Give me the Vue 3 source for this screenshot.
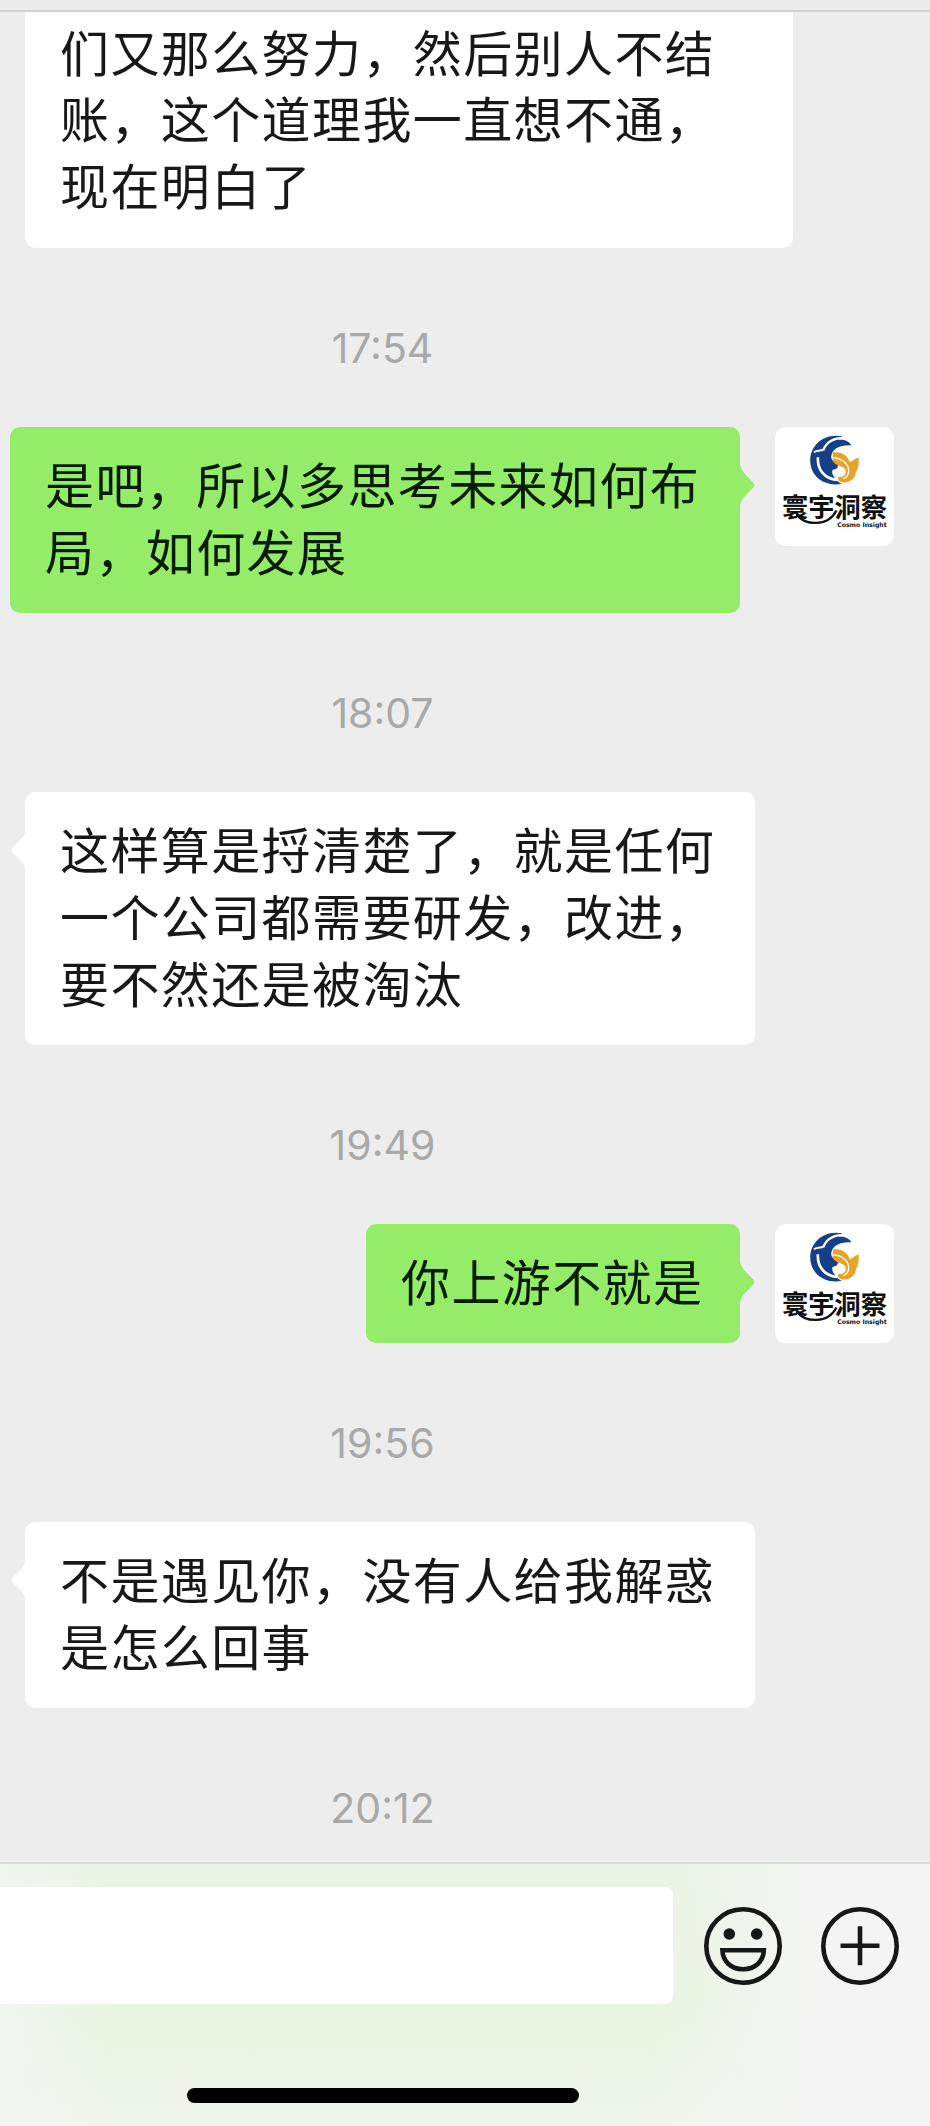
<template>
  <div class="screen">
    <header class="nav-edge"></header>

    <main class="chat">
      <template v-for="(item, i) in messages" :key="i">
        <div class="row" :class="item.from">
          <div class="bubble" :class="{ wide: item.wide, cut: item.cut }">
            <p v-for="line in item.lines" :key="line" class="line">{{ line }}</p>
            <svg v-if="!item.cut" class="tail" viewBox="0 0 15 40">
              <path d="M0 0 C1 4 3 7 5 9 L13.2 17.4 Q15.4 20 13.2 22.6 L5 31 C3 33 1 36 0 40 Z" />
            </svg>
          </div>
          <svg v-if="item.from === 'me'" class="avatar" viewBox="47 21 358 358">
            <rect x="47" y="21" width="358" height="358" fill="#fff" />
            <path
              fill="#153f86"
              d="M249 49 C196 38 153 74 153 122 C153 170 196 202 248 192 C238 188 233 184 231 177 C222 170 217 160 220 150 C232 148 238 143 236 136 C228 128 216 124 216 110 C218 88 240 74 277 76 C266 60 252 58 238 60 Z"
            />
            <path fill="none" stroke="#fff" stroke-width="7" d="M262 54 C226 52 202 66 192 91" />
            <path fill="none" stroke="#fff" stroke-width="6" d="M164 97 C174 90 182 93 192 90" />
            <path fill="none" stroke="#fff" stroke-width="8" d="M176 112 C174 148 194 176 234 180" />
            <path
              fill="#e6a428"
              d="M221 98 C244 94 264 104 272 126 C280 126 286 116 299 113 C300 134 296 150 290 158 C290 176 272 190 250 188 C238 186 234 178 238 171 C256 174 264 160 258 148 C250 136 226 138 220 120 C220 110 222 104 221 98 Z"
            />
            <path fill="none" stroke="#fff" stroke-width="4" d="M220 114 C248 114 272 132 268 158 C266 168 260 174 252 176" />
            <path fill="none" stroke="#111" stroke-width="7" d="M112 284 C138 318 206 322 232 272" />
            <text class="logo-name" x="68" y="291" textLength="316">寰宇洞察</text>
            <text class="logo-sub" x="234" y="322" textLength="149" lengthAdjust="spacingAndGlyphs">Cosmo Insight</text>
          </svg>
        </div>
        <time class="time">{{ item.time }}</time>
      </template>
    </main>

    <footer class="composer">
      <div class="input-row">
        <div class="input"></div>
        <svg class="icon" viewBox="0 0 78 78">
          <circle cx="39" cy="39" r="36.7" />
          <circle class="eye" cx="25.3" cy="27" r="5.8" />
          <circle class="eye" cx="52.7" cy="27" r="5.8" />
          <path d="M18.4 43.2 H59.8 C59.4 54.5 51 62.2 39.1 62.2 C27.2 62.2 18.8 54.5 18.4 43.2 Z" />
        </svg>
        <svg class="icon" viewBox="0 0 78 78">
          <circle cx="39" cy="39" r="36.7" />
          <path d="M39 19.3 V58.3 M19.5 38.8 H58.5" />
        </svg>
      </div>
      <div class="home-bar"></div>
    </footer>
  </div>
</template>

<script setup>
const messages = [
  {
    from: 'other',
    cut: true,
    lines: ['们又那么努力，然后别人不结', '账，这个道理我一直想不通，', '现在明白了'],
    time: '17:54'
  },
  {
    from: 'me',
    wide: true,
    lines: ['是吧，所以多思考未来如何布', '局，如何发展'],
    time: '18:07'
  },
  {
    from: 'other',
    wide: true,
    lines: ['这样算是捋清楚了，就是任何', '一个公司都需要研发，改进，', '要不然还是被淘汰'],
    time: '19:49'
  },
  {
    from: 'me',
    lines: ['你上游不就是'],
    time: '19:56'
  },
  {
    from: 'other',
    wide: true,
    lines: ['不是遇见你，没有人给我解惑', '是怎么回事'],
    time: '20:12'
  }
]
</script>

<style>
body {
  margin: 0;
  background: #ededed;
}
</style>

<style scoped>
.screen {
  width: 930px;
  height: 2126px;
  display: flex;
  flex-direction: column;
  overflow: hidden;
  background: #ededed;
  font-family: "Inter", "Noto Sans CJK SC", sans-serif;
}

.nav-edge {
  flex: none;
  height: 10px;
  background: #ececec;
  border-bottom: 2px solid #d2d2d2;
}

.chat {
  flex: none;
  height: 1850px;
  overflow: hidden;
}

.row {
  display: flex;
  align-items: flex-start;
}

.row.other {
  padding-left: 25px;
}

.row.me {
  justify-content: flex-end;
  gap: 35px;
  padding-right: 36px;
}

.bubble {
  position: relative;
  box-sizing: border-box;
  padding: 23.5px 35px 29.5px;
  border-radius: 10px;
  background: #fff;
  color: #181818;
}

.bubble.wide {
  width: 730px;
}

.bubble.cut {
  width: 768px;
  padding-top: 5.5px;
  padding-bottom: 30.5px;
  border-radius: 0 0 10px 10px;
}

.me .bubble {
  background: #95ec69;
  color: #061c02;
}

.me .bubble:not(.wide) {
  width: 374px;
}

.line {
  margin: 0;
  font-family: "Noto Sans CJK SC", sans-serif;
  font-size: 49px;
  line-height: 66.8px;
  letter-spacing: 1.4px;
  white-space: nowrap;
}

/* little arrow pointing at the sender */
.tail {
  position: absolute;
  top: 38px;
  right: -14.5px;
  width: 15px;
  height: 40px;
  fill: #95ec69;
}

.other .tail {
  right: auto;
  left: -14.5px;
  fill: #fff;
  transform: scaleX(-1);
}

.avatar {
  flex: none;
  width: 119px;
  height: 119px;
  border-radius: 11px;
}

.logo-name {
  font-family: "Noto Sans CJK SC", sans-serif;
  font-size: 79px;
  font-weight: 700;
  fill: #111;
}

.logo-sub {
  font-family: "DejaVu Sans", sans-serif;
  font-size: 19px;
  font-weight: 700;
  fill: #111;
}

.time {
  display: block;
  box-sizing: border-box;
  width: 765px;
  height: 178.4px;
  padding-top: 74.5px;
  font-size: 41px;
  line-height: 50px;
  text-align: center;
  color: #a9a9a9;
}

.composer {
  flex: 1;
  border-top: 2px solid #d9dcd7;
  background:
    linear-gradient(90deg, rgba(243, 244, 243, 0.8) 0, rgba(243, 244, 243, 0) 12%, rgba(243, 244, 243, 0) 70%, #f4f4f4 88%),
    linear-gradient(180deg, #e9f5e3 0, #e7f6e0 50%, #eff5ec 100%);
}

.input-row {
  display: flex;
  align-items: center;
  padding-top: 23px;
}

.input {
  width: 673px;
  height: 117px;
  border-radius: 0 8px 8px 0;
  background: #fff;
}

.icon {
  width: 78px;
  height: 78px;
  margin-left: 31px;
  fill: none;
  stroke: #161816;
  stroke-width: 4.6;
}

.icon + .icon {
  margin-left: 39px;
}

.icon .eye {
  fill: #161816;
  stroke: none;
}

.home-bar {
  width: 392px;
  height: 15px;
  margin: 84px 0 0 187px;
  border-radius: 8px;
  background: #000;
}
</style>
